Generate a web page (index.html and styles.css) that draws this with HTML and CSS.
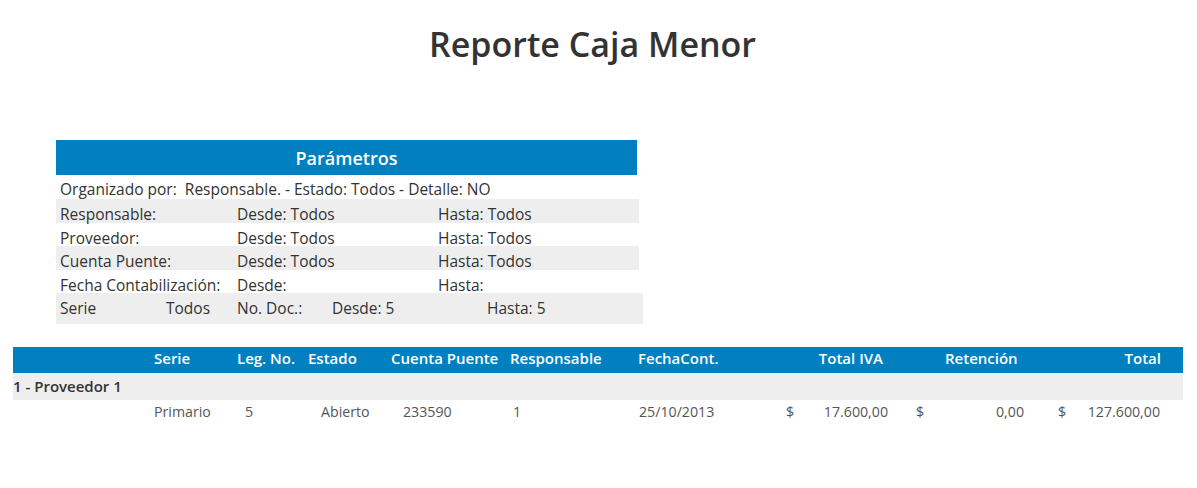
FILE: index.html
```html
<!DOCTYPE html>
<html lang="es">
<head>
<meta charset="utf-8">
<title>Reporte Caja Menor</title>
<link rel="stylesheet" href="styles.css">
</head>
<body>
<h1 class="title">Reporte Caja Menor</h1>

<section class="params">
  <div class="params-head">Parámetros</div>
  <div class="prow first">Organizado por:&nbsp; Responsable. - Estado: Todos - Detalle: NO</div>
  <div class="prow grid gray"><span>Responsable:</span><span>Desde: Todos</span><span>Hasta: Todos</span></div>
  <div class="prow grid"><span>Proveedor:</span><span>Desde: Todos</span><span>Hasta: Todos</span></div>
  <div class="prow grid gray"><span>Cuenta Puente:</span><span>Desde: Todos</span><span>Hasta: Todos</span></div>
  <div class="prow grid"><span>Fecha Contabilización:</span><span>Desde:</span><span>Hasta:</span></div>
  <div class="prow serie gray"><span class="s1">Serie</span><span class="s2">Todos</span><span class="s3">No. Doc.:</span><span class="s4">Desde: 5</span><span>Hasta: 5</span></div>
</section>

<table class="report">
  <colgroup>
    <col class="c1"><col class="c2"><col class="c3"><col class="c4"><col class="c5"><col class="c6"><col class="c7"><col class="c8"><col class="c9"><col class="c10">
  </colgroup>
  <thead>
    <tr>
      <th></th><th>Serie</th><th>Leg. No.</th><th>Estado</th><th>Cuenta Puente</th><th>Responsable</th><th>FechaCont.</th><th class="r iva">Total IVA</th><th class="ret">Retención</th><th class="r tot">Total</th>
    </tr>
  </thead>
  <tbody>
    <tr class="group"><td colspan="10">1 - Proveedor 1</td></tr>
    <tr class="data">
      <td></td><td class="d-serie">Primario</td><td class="d-leg">5</td><td class="d-est">Abierto</td><td class="d-cta">233590</td><td class="d-resp">1</td><td class="d-fecha">25/10/2013</td>
      <td class="money m1"><span>$</span><span class="amt">17.600,00</span></td>
      <td class="money m2"><span>$</span><span class="amt">0,00</span></td>
      <td class="money m3"><span>$</span><span class="amt">127.600,00</span></td>
    </tr>
  </tbody>
</table>
</body>
</html>
```

FILE: styles.css
```css
* { box-sizing: border-box; }
body {
  margin: 0;
  font-family: "Open Sans", "Noto Sans", sans-serif;
  color: #333;
  background: #fff;
}
.title {
  margin: 22px 0 0;
  text-align: center;
  font-size: 34px;
  font-weight: 600;
  line-height: 44px;
  color: #333;
  padding-right: 12px;
}
.params {
  margin: 74px 0 0 56px;
  width: 587px;
  font-size: 15.5px;
}
.params-head {
  width: 581px;
  height: 35px;
  background: #0080c0;
  color: #fff;
  font-weight: 600;
  font-size: 18px;
  text-align: center;
  line-height: 37px;
}
.prow {
  height: 23.5px;
  line-height: 23px;
  padding: 4px 0 0 4px;
  width: 583px;
  white-space: nowrap;
}
.prow.first { height: 24px; padding-top: 3px; }
.prow.grid {
  display: grid;
  grid-template-columns: 177px 201px 1fr;
}
.gray { background: #eeeeee; }
.prow.serie {
  display: flex;
  height: 31px;
  line-height: 30px;
  padding-top: 0;
  width: 587px;
}
.s1 { width: 106px; }
.s2 { width: 71px; }
.s3 { width: 95px; }
.s4 { width: 155px; }

.report {
  margin: 23px 0 0 13px;
  width: 1170px;
  border-collapse: collapse;
  table-layout: fixed;
  font-size: 14.2px;
}
.c1 { width: 137px; }
.c2 { width: 83px; }
.c3 { width: 71px; }
.c4 { width: 83px; }
.c5 { width: 119px; }
.c6 { width: 128px; }
.c7 { width: 126px; }
.c8 { width: 130px; }
.c9 { width: 140px; }
.c10 { width: 153px; }
.report thead tr { background: #0080c0; }
.report th {
  height: 26px;
  color: #fff;
  font-weight: 600;
  font-size: 15px;
  text-align: left;
  padding: 0 0 5px 4px;
  white-space: nowrap;
}
.report th.r { text-align: right; }
.report th.iva { padding-right: 7px; }
.report th.tot { padding-right: 22px; }
.report th.ret { padding-left: 55px; }
.group td {
  background: #eeeeee;
  height: 27px;
  font-weight: 600;
  font-size: 15px;
  padding: 0 0 2px;
  color: #333;
}
.data td {
  height: 22px;
  padding: 0 0 0 4px;
  color: #555;
  white-space: nowrap;
  vertical-align: middle;
}
.data td.d-leg { padding-left: 12px; }
.data td.d-est { padding-left: 17px; }
.data td.d-cta { padding-left: 16px; }
.data td.d-resp { padding-left: 7px; }
.data td.d-fecha { padding-left: 5px; }
.data td.m1 { padding-left: 26px; padding-right: 2px; }
.data td.m2 { padding-left: 26px; padding-right: 6px; }
.data td.m3 { padding-left: 28px; padding-right: 23px; }
.amt { float: right; }
```
